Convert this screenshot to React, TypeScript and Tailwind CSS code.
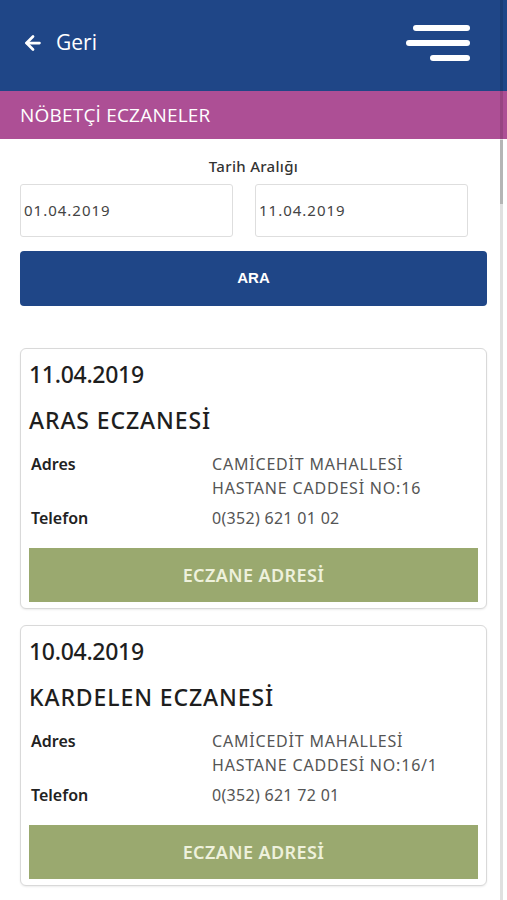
import { ArrowLeft } from "lucide-react";

const eczaneler = [
  {
    tarih: "11.04.2019",
    ad: "ARAS ECZANESİ",
    adres: ["CAMİCEDİT MAHALLESİ", "HASTANE CADDESİ NO:16"],
    telefon: "0(352) 621 01 02",
  },
  {
    tarih: "10.04.2019",
    ad: "KARDELEN ECZANESİ",
    adres: ["CAMİCEDİT MAHALLESİ", "HASTANE CADDESİ NO:16/1"],
    telefon: "0(352) 621 72 01",
  },
];

const EczaneCard = ({ e }: { e: (typeof eczaneler)[number] }) => (
  <div className="rounded-md border border-[#d9d9d9] bg-white px-2 pt-[10px] pb-[6px] shadow-[0_1px_2px_rgba(0,0,0,0.08)]">
    <div className="text-[23px] font-medium leading-[30px] text-[#1e1e1e] tracking-[-0.3px]">{e.tarih}</div>
    <div className="mt-[16px] text-[23px] font-medium leading-[30px] text-[#1e1e1e] tracking-[0.9px]">{e.ad}</div>
    <div className="mt-[17px] grid grid-cols-[181px_1fr] px-[2px] text-[16px] leading-[24px]">
      <span className="font-semibold text-[#222]">Adres</span>
      <span className="text-[#555] tracking-[0.8px]">
        {e.adres[0]}
        <br />
        {e.adres[1]}
      </span>
      <span className="mt-[6px] font-semibold text-[#222]">Telefon</span>
      <span className="mt-[6px] text-[#555] tracking-[0.3px]">{e.telefon}</span>
    </div>
    <button className="mt-[18px] flex h-[54px] w-full items-center justify-center bg-[#9aa96f] text-[18px] font-semibold text-[#eef1dc] tracking-[0.4px]">
      ECZANE ADRESİ
    </button>
  </div>
);

export default function App() {
  return (
    <div className="relative h-[900px] w-[507px] overflow-hidden bg-white font-['Noto_Sans',sans-serif]">
      <header className="flex h-[91px] items-center justify-between bg-[#1f4687] pb-[6px] pl-[22px] pr-[37px]">
        <div className="flex items-center gap-[12px] text-white">
          <ArrowLeft size={22} strokeWidth={3} />
          <span className="font-['Open_Sans',sans-serif] text-[21px] leading-none">Geri</span>
        </div>
        <div className="flex w-[64px] flex-col items-end gap-[9px]">
          <span className="h-[6px] w-[57px] rounded-full bg-white" />
          <span className="h-[6px] w-[64px] rounded-full bg-white" />
          <span className="h-[6px] w-[40px] rounded-full bg-white" />
        </div>
      </header>

      <div className="flex h-[48px] items-center bg-[#ad4f95] px-5">
        <span className="font-['Open_Sans',sans-serif] text-[19px] tracking-[0.2px] text-white">
          NÖBETÇİ ECZANELER
        </span>
      </div>

      <main className="px-5">
        <div className="pt-[16px] text-center text-[15px] font-medium leading-[22px] tracking-[0.3px] text-[#333]">
          Tarih Aralığı
        </div>
        <div className="mt-[7px] flex gap-[22px]">
          <div className="flex h-[53px] w-[213px] items-center rounded-[3px] border border-[#dedede] px-[3px] text-[15px] tracking-[1px] text-[#444]">
            01.04.2019
          </div>
          <div className="flex h-[53px] w-[213px] items-center rounded-[3px] border border-[#dedede] px-[3px] text-[15px] tracking-[1px] text-[#444]">
            11.04.2019
          </div>
        </div>
        <button className="mt-[14px] flex h-[55px] w-full items-center justify-center rounded-[4px] bg-[#1f4687] font-['Liberation_Sans',sans-serif] text-[15px] font-bold text-white">
          ARA
        </button>

        <div className="mt-[42px] flex flex-col gap-[16px]">
          {eczaneler.map((e) => (
            <EczaneCard key={e.tarih} e={e} />
          ))}
          <div className="h-[40px] rounded-md border border-[#d9d9d9] bg-white" />
        </div>
      </main>

      {/* scrollbar */}
      <div className="absolute right-[4px] top-0 h-[900px] w-[3px] bg-[rgba(0,0,0,0.12)]" />
      <div className="absolute right-[4px] top-[140px] h-[64px] w-[3px] bg-[#b5b5b5]" />
    </div>
  );
}
